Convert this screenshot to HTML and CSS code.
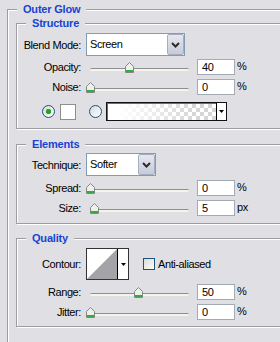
FILE: index.html
```html
<!DOCTYPE html>
<html>
<head>
  <title>Outer Glow</title>
  <link rel="stylesheet" href="styles.css">
</head>
<body>
  <fieldset class="group outer">
    <legend>Outer Glow</legend>

    <fieldset class="group structure">
      <legend>Structure</legend>
      <div class="row row-select">
        <span class="lbl">Blend Mode:</span>
        <div class="select select-blend">
          <span class="value">Screen</span>
          <span class="btn"><svg width="9" height="6" viewBox="0 0 9 6"><polyline points="1,1 4.5,4.5 8,1" fill="none" stroke="#2b2b2b" stroke-width="2"/></svg></span>
        </div>
      </div>
      <div class="row row-slider first">
        <span class="lbl">Opacity:</span>
        <div class="slider">
          <div class="track"></div>
          <svg class="thumb" style="left:39px" width="9" height="11" viewBox="0 0 9 11"><path d="M4.5 .5 8.5 4.5V10.5H.5V4.5Z" fill="#eef0ec" stroke="#7f8a83"/><rect x="1" y="8" width="7" height="2" fill="#2fae3a"/></svg>
        </div>
        <span class="field">40</span><span class="unit">%</span>
      </div>
      <div class="row row-slider">
        <span class="lbl">Noise:</span>
        <div class="slider">
          <div class="track"></div>
          <svg class="thumb" style="left:0px" width="9" height="11" viewBox="0 0 9 11"><path d="M4.5 .5 8.5 4.5V10.5H.5V4.5Z" fill="#eef0ec" stroke="#7f8a83"/><rect x="1" y="8" width="7" height="2" fill="#2fae3a"/></svg>
        </div>
        <span class="field">0</span><span class="unit">%</span>
      </div>
      <div class="row row-color">
        <span class="radio on"></span>
        <span class="swatch"></span>
        <span class="radio radio-2"></span>
        <div class="grad">
          <span class="fill"></span>
          <span class="drop"><svg width="5" height="3" viewBox="0 0 5 3"><path d="M0 0H5L2.5 3Z" fill="#000"/></svg></span>
        </div>
      </div>
    </fieldset>

    <fieldset class="group elements">
      <legend>Elements</legend>
      <div class="row row-select">
        <span class="lbl">Technique:</span>
        <div class="select select-tech">
          <span class="value">Softer</span>
          <span class="btn"><svg width="9" height="6" viewBox="0 0 9 6"><polyline points="1,1 4.5,4.5 8,1" fill="none" stroke="#2b2b2b" stroke-width="2"/></svg></span>
        </div>
      </div>
      <div class="row row-slider">
        <span class="lbl">Spread:</span>
        <div class="slider">
          <div class="track"></div>
          <svg class="thumb" style="left:0px" width="9" height="11" viewBox="0 0 9 11"><path d="M4.5 .5 8.5 4.5V10.5H.5V4.5Z" fill="#eef0ec" stroke="#7f8a83"/><rect x="1" y="8" width="7" height="2" fill="#2fae3a"/></svg>
        </div>
        <span class="field">0</span><span class="unit">%</span>
      </div>
      <div class="row row-slider">
        <span class="lbl">Size:</span>
        <div class="slider">
          <div class="track"></div>
          <svg class="thumb" style="left:4px" width="9" height="11" viewBox="0 0 9 11"><path d="M4.5 .5 8.5 4.5V10.5H.5V4.5Z" fill="#eef0ec" stroke="#7f8a83"/><rect x="1" y="8" width="7" height="2" fill="#2fae3a"/></svg>
        </div>
        <span class="field">5</span><span class="unit">px</span>
      </div>
    </fieldset>

    <fieldset class="group quality">
      <legend>Quality</legend>
      <div class="row row-contour">
        <span class="lbl">Contour:</span>
        <div class="contour">
          <svg width="30" height="30" viewBox="0 0 30 30"><path d="M0 30 30 0V30Z" fill="#a4a4a8"/></svg>
          <span class="drop"><svg width="5" height="3" viewBox="0 0 5 3"><path d="M0 0H5L2.5 3Z" fill="#000"/></svg></span>
        </div>
        <span class="check"></span>
        <span class="check-label">Anti-aliased</span>
      </div>
      <div class="row row-slider">
        <span class="lbl">Range:</span>
        <div class="slider">
          <div class="track"></div>
          <svg class="thumb" style="left:48px" width="9" height="11" viewBox="0 0 9 11"><path d="M4.5 .5 8.5 4.5V10.5H.5V4.5Z" fill="#eef0ec" stroke="#7f8a83"/><rect x="1" y="8" width="7" height="2" fill="#2fae3a"/></svg>
        </div>
        <span class="field">50</span><span class="unit">%</span>
      </div>
      <div class="row row-slider">
        <span class="lbl">Jitter:</span>
        <div class="slider">
          <div class="track"></div>
          <svg class="thumb" style="left:0px" width="9" height="11" viewBox="0 0 9 11"><path d="M4.5 .5 8.5 4.5V10.5H.5V4.5Z" fill="#eef0ec" stroke="#7f8a83"/><rect x="1" y="8" width="7" height="2" fill="#2fae3a"/></svg>
        </div>
        <span class="field">0</span><span class="unit">%</span>
      </div>
    </fieldset>
  </fieldset>
</body>
</html>
```

FILE: styles.css
```css
body {
  margin: 0;
  background-color: #e0dfe3;
  font-family: "Liberation Sans", Arial, sans-serif;
  font-size: 11px;
  letter-spacing: -0.4px;
  color: #000;
  overflow: hidden;
}

/* etched group boxes */
.group {
  margin: 0;
  padding: 0;
  min-width: 0;
  border: 1px solid #9d9da1;
  box-shadow: inset 1px 1px 0 #fff, 1px 1px 0 #fff;
}
.group > legend {
  padding: 0 6px;
  line-height: 13px;
  font-weight: bold;
  letter-spacing: -0.2px;
  color: #1644d4;
  background-color: #e0dfe3;
}
.outer {
  width: 320px;
  margin: 3px 0 0 7px;
  padding: 1px 0 40px 8px;
}
.outer > legend {
  margin-left: 1px;
}
.outer > .group > legend {
  margin-left: 9px;
}
.structure {
  padding: 3px 0 7px;
}
.elements {
  margin-top: 9px;
  padding: 2px 0 7px;
}
.quality {
  margin-top: 8px;
  padding: 3px 0 6px;
}

/* rows */
.row {
  display: flex;
  align-items: center;
}
.row + .row {
  margin-top: 4px;
}
.row.first {
  margin-top: 3px;
}
.lbl {
  flex: none;
  width: 64px;
  margin-right: 5px;
  text-align: right;
}
.row-select {
  height: 23px;
}
.row-slider {
  height: 16px;
}

/* drop-down list */
.select {
  display: flex;
  height: 23px;
  box-sizing: border-box;
  border: 1px solid #7f9db9;
  background-color: #fff;
}
.select-blend {
  width: 99px;
}
.select-tech {
  width: 70px;
}
.select .value {
  flex: 1;
  padding-left: 3px;
  line-height: 21px;
}
.select .btn {
  display: flex;
  align-items: center;
  justify-content: center;
  width: 17px;
  box-sizing: border-box;
  border: 1px solid #a3adc4;
  border-radius: 2px;
  background: linear-gradient(#e6e7ee, #c8cbd8);
}

/* slider */
.slider {
  position: relative;
  flex: none;
  width: 107px;
  height: 16px;
  margin-right: 4px;
}
.track {
  width: 99px;
  height: 2px;
  margin: 9px 0 0 4px;
  border-top: 1px solid #8f8f93;
  border-radius: 2px;
  background-color: #f6f4ea;
}
.thumb {
  position: absolute;
  top: 3px;
}
.field {
  flex: none;
  width: 38px;
  height: 16px;
  box-sizing: border-box;
  padding-left: 4px;
  border: 1px solid #a4abb5;
  background-color: #fff;
  line-height: 14px;
}
.unit {
  align-self: flex-start;
  margin: 1px 0 0 2px;
  line-height: 12px;
}

/* colour row */
.row-color {
  height: 19px;
  padding-left: 25px;
}
.row.row-color {
  margin-top: 7px;
}
.radio {
  flex: none;
  width: 13px;
  height: 13px;
  box-sizing: border-box;
  border: 1px solid #1f5283;
  border-radius: 50%;
  background: linear-gradient(135deg, #d8d8d2, #fff);
}
.radio.on {
  background: radial-gradient(circle, #22a52a 2.4px, transparent 3px), linear-gradient(135deg, #d8d8d2, #fff);
}
.radio-2 {
  margin-left: 13px;
}
.swatch {
  flex: none;
  width: 16px;
  height: 16px;
  margin-left: 5px;
  box-sizing: border-box;
  border: 1px solid #8e8e8e;
  background-color: #fff;
}
.grad {
  display: flex;
  width: 121px;
  height: 19px;
  margin-left: 4px;
  box-sizing: border-box;
  border: 1px solid #111;
  box-shadow: inset 1px 1px 0 #6d6d6d;
}
.grad .fill {
  flex: 1;
  margin: 1px 0 0 1px;
  background: linear-gradient(to right, #fff 10%, rgba(255, 255, 255, 0) 80%), repeating-conic-gradient(#d6d6d6 0 25%, #fff 0 50%) 0 0 / 8px 8px;
}
.drop {
  display: flex;
  align-items: center;
  justify-content: center;
  width: 9px;
  border-left: 1px solid #000;
  background-color: #fff;
}

/* quality */
.row-contour {
  height: 32px;
}
.contour {
  display: flex;
  width: 43px;
  height: 32px;
  box-sizing: border-box;
  border: 1px solid #333;
  background-color: #fff;
}
.contour .drop {
  width: 10px;
}
.check {
  flex: none;
  width: 12px;
  height: 12px;
  margin-left: 14px;
  box-sizing: border-box;
  border: 1px solid #1c5180;
  background: linear-gradient(135deg, #dcdcd7, #fbfbf9);
}
.check-label {
  margin-left: 3px;
}
```
